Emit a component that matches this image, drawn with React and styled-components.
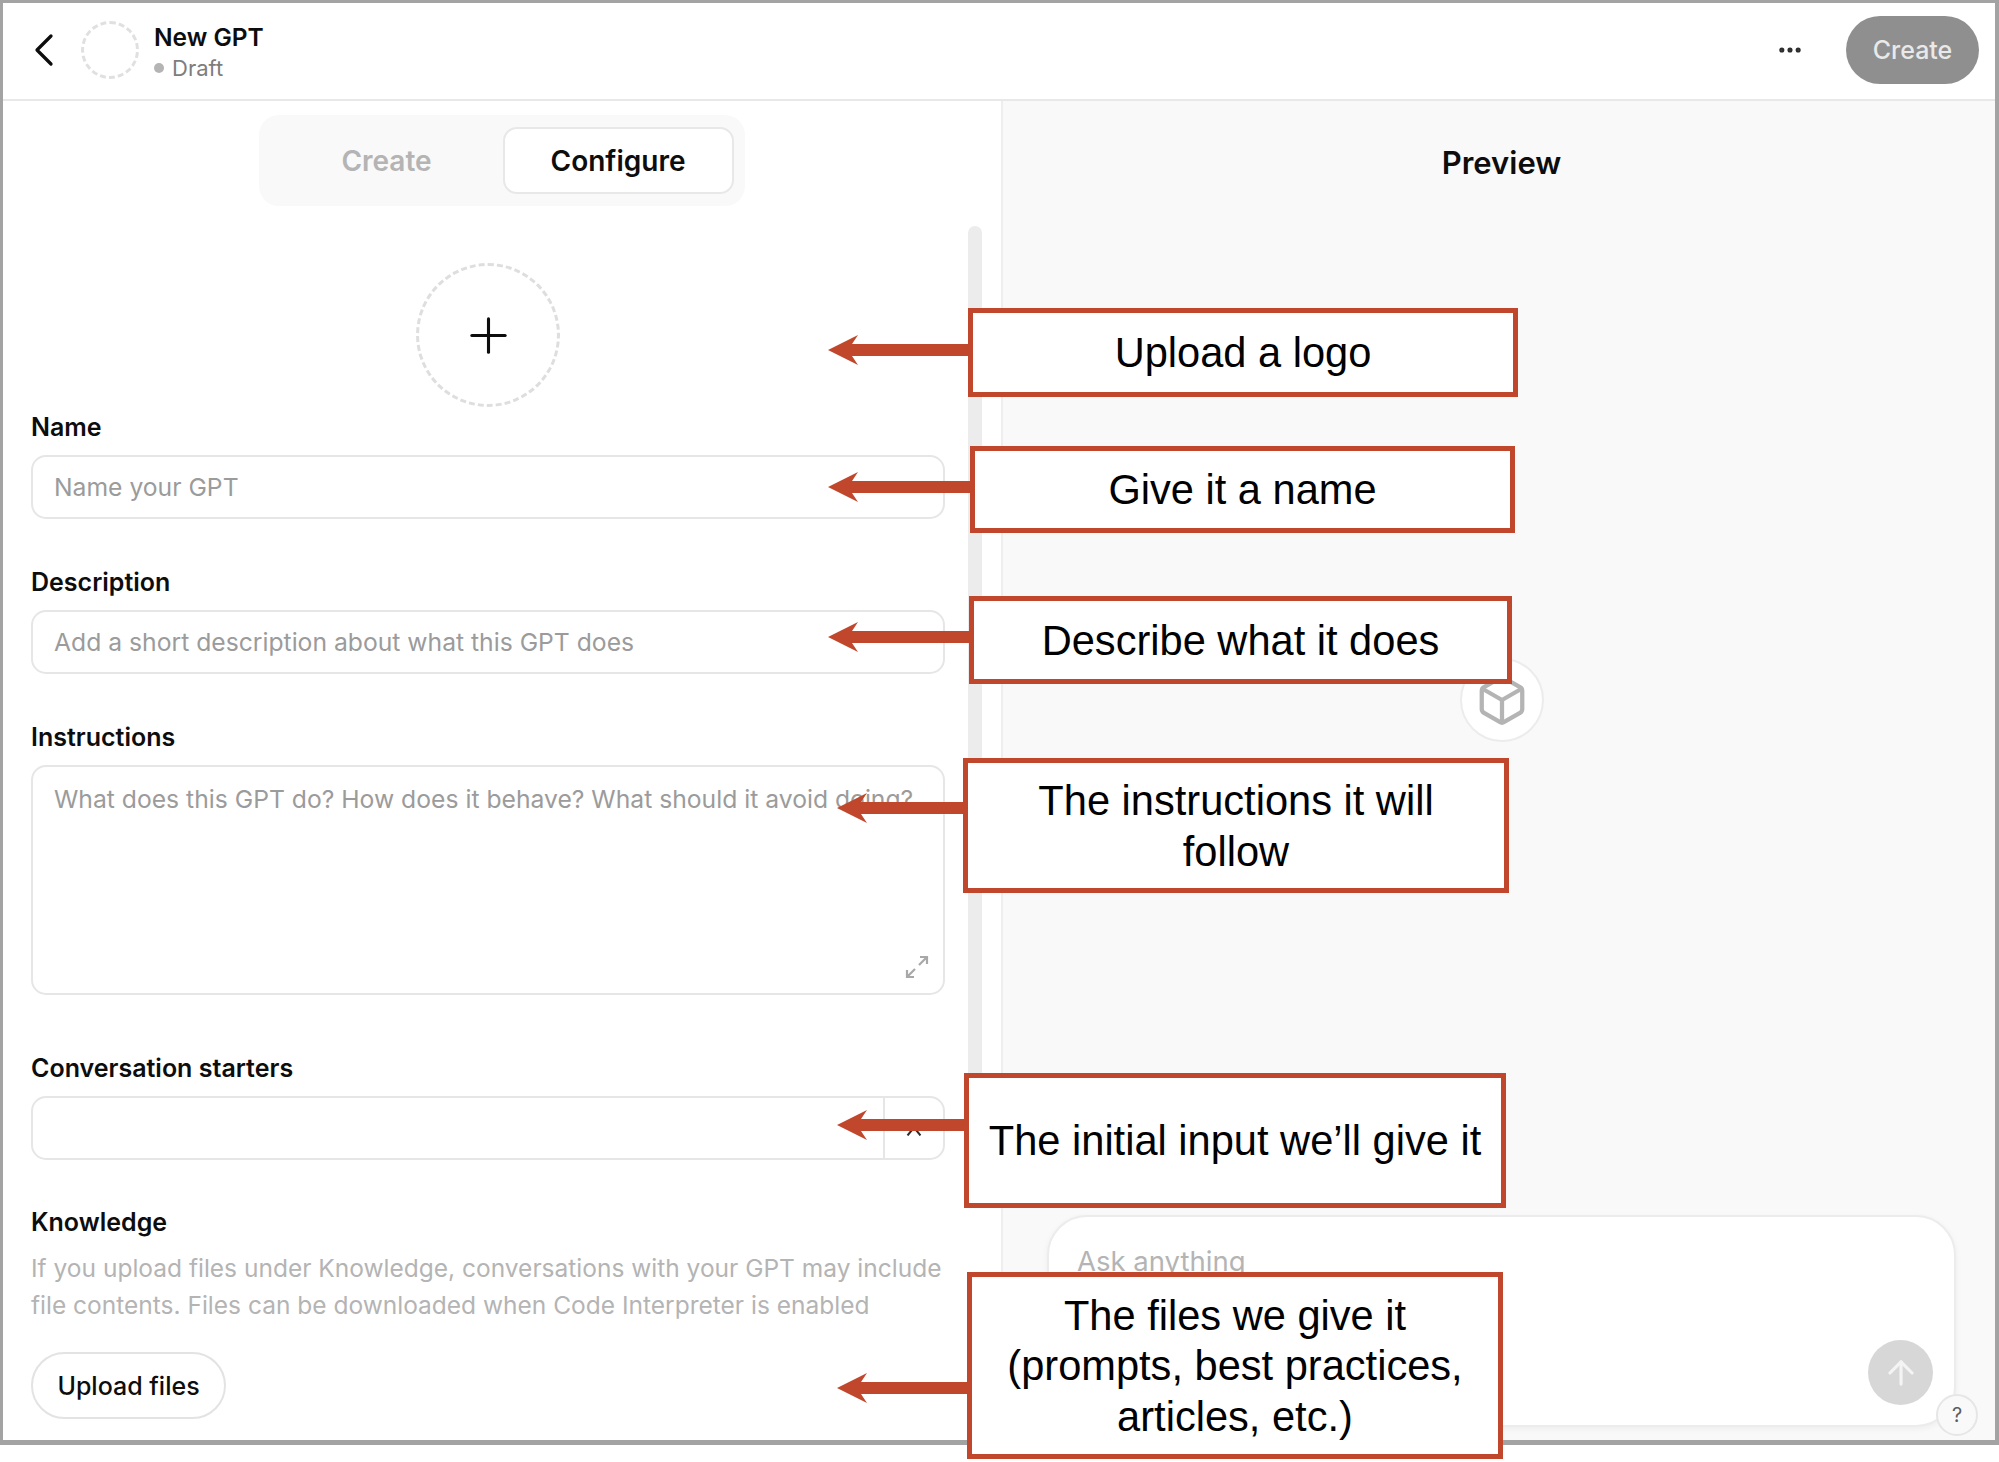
import styled, { createGlobalStyle } from 'styled-components';
import { Box, ChevronLeft, Ellipsis, Plus, ArrowUp } from 'lucide-react';

const GlobalStyle = createGlobalStyle`
  html, body {
    margin: 0;
    background: #fff;
  }
  * {
    box-sizing: border-box;
  }
`;

const Page = styled.div`
  position: relative;
  width: 1999px;
  height: 1462px;
  overflow: hidden;
  font-family: Inter, 'Noto Sans', sans-serif;
  color: #0d0d0d;
`;

const Frame = styled.div`
  display: flex;
  flex-direction: column;
  width: 1999px;
  height: 1445px;
  border: solid #a3a3a3;
  border-width: 3px 4px 5px 3px;
`;

const Header = styled.header`
  display: flex;
  flex: none;
  align-items: center;
  height: 98px;
  padding: 0 16px 3px 33px;
  border-bottom: 2px solid #e8e8e8;
`;

const BackButton = styled.div`
  display: flex;
  margin-left: -20px;
  color: #0d0d0d;
`;

const HeaderAvatar = styled.div`
  width: 58px;
  height: 58px;
  margin: 0 15px 0 9px;
  border: 3px dashed #e0e0e0;
  border-radius: 50%;
`;

const Title = styled.div`
  flex: 1;
  padding-top: 3px;
`;

const TitleName = styled.div`
  font-size: 24.5px;
  font-weight: 600;
  line-height: 32px;
`;

const TitleStatus = styled.div`
  display: flex;
  align-items: center;
  gap: 8px;
  margin-top: 1px;
  font-size: 22px;
  line-height: 28px;
  color: #7d7d7d;

  &::before {
    content: '';
    width: 10px;
    height: 10px;
    border-radius: 50%;
    background: #b4b4b4;
  }
`;

const MoreButton = styled.div`
  display: flex;
  margin-right: 42px;
  color: #2d2d2d;
`;

const PublishButton = styled.div`
  display: flex;
  align-items: center;
  justify-content: center;
  width: 133px;
  height: 68px;
  border-radius: 34px;
  background: #8f8f8f;
  color: #e9e9e9;
  font-size: 25px;
  font-weight: 500;
`;

const Main = styled.div`
  display: flex;
  flex: 1;
  min-height: 0;
`;

const EditorPane = styled.section`
  position: relative;
  flex: none;
  width: 1000px;
  height: 100%;
  padding: 14px 0 0 28px;
  overflow: hidden;
  border-right: 2px solid #eeeeee;
`;

const Scrollbar = styled.div`
  position: absolute;
  top: 125px;
  left: 965px;
  width: 14px;
  height: 980px;
  border-radius: 7px;
  background: #ececec;
`;

const TabsRow = styled.div`
  display: flex;
  justify-content: center;
  width: 941px;
`;

const Tabs = styled.div`
  display: flex;
  align-items: center;
  justify-content: flex-end;
  width: 486px;
  height: 91px;
  padding-right: 11px;
  border-radius: 20px;
  background: #f9f9f9;
`;

const Tab = styled.div`
  display: flex;
  align-items: center;
  justify-content: center;
  width: ${(p) => (p.$active ? '231px' : '232px')};
  height: 67px;
  border-radius: 14px;
  font-size: 28px;
  font-weight: 600;
  color: ${(p) => (p.$active ? '#0d0d0d' : '#b4b4b4')};
  background: ${(p) => (p.$active ? '#fff' : 'transparent')};
  border: ${(p) => (p.$active ? '2px solid #e8e8e8' : 'none')};
`;

const Form = styled.div`
  width: 914px;
`;

const LogoPicker = styled.div`
  display: flex;
  align-items: center;
  justify-content: center;
  width: 144px;
  height: 144px;
  margin: 57px auto 4px;
  border: 3px dashed #dedede;
  border-radius: 50%;
  color: #0d0d0d;
`;

const Label = styled.div`
  margin-bottom: 12px;
  font-size: 25px;
  font-weight: 600;
  line-height: 32px;
`;

const Field = styled.div`
  display: flex;
  position: relative;
  height: ${(p) => p.$height || 64}px;
  margin-bottom: ${(p) => p.$after || 47}px;
  padding: ${(p) => (p.$multi ? '16px 21px' : '0 21px')};
  align-items: ${(p) => (p.$multi ? 'flex-start' : 'center')};
  border: 2px solid #e6e6e6;
  border-radius: 15px;
  font-size: 24.7px;
  line-height: 32px;
  color: #9b9b9b;
  white-space: nowrap;
`;

const ExpandIcon = styled.svg`
  position: absolute;
  right: 14px;
  bottom: 14px;
  width: 24px;
  height: 24px;
  color: #a8a8a8;
`;

const StarterInput = styled.div`
  display: flex;
  justify-content: flex-end;
  height: 64px;
  margin-bottom: 46px;
  border: 2px solid #e6e6e6;
  border-radius: 15px;
`;

const StarterRemove = styled.div`
  display: flex;
  align-items: center;
  justify-content: center;
  width: 60px;
  padding-top: 5px;
  border-left: 2px solid #e6e6e6;
  color: #2d2d2d;
`;

const Hint = styled.p`
  margin: 0 0 28px;
  font-size: 24.5px;
  line-height: 37px;
  color: #b4b4b4;
`;

const UploadButton = styled.div`
  display: inline-flex;
  align-items: center;
  justify-content: center;
  width: 195px;
  height: 67px;
  border: 2px solid #e3e3e3;
  border-radius: 34px;
  font-size: 25px;
  font-weight: 500;
`;

const PreviewPane = styled.section`
  position: relative;
  display: flex;
  flex: 1;
  flex-direction: column;
  align-items: center;
  padding-left: 5px;
  background: #f9f9f9;
`;

const PreviewTitle = styled.h2`
  margin: 42px 0 0;
  font-size: 31px;
  font-weight: 600;
  line-height: 40px;
`;

const PreviewBody = styled.div`
  display: flex;
  flex: 1;
  align-items: center;
  justify-content: center;
  padding-top: 2px;
`;

const CubeBadge = styled.div`
  display: flex;
  align-items: center;
  justify-content: center;
  width: 84px;
  height: 84px;
  border: 2px solid #ececec;
  border-radius: 50%;
  background: #fff;
  color: #b4b4b4;
`;

const Composer = styled.div`
  position: relative;
  width: 909px;
  height: 212px;
  margin-bottom: 13px;
  padding: 24px 28px;
  border: 2px solid #ececec;
  border-radius: 40px;
  background: #fff;
  box-shadow: 0 2px 6px rgba(0, 0, 0, 0.05);
  font-size: 27.5px;
  line-height: 40px;
  color: #b4b4b4;
`;

const SendButton = styled.div`
  position: absolute;
  right: 21px;
  bottom: 20px;
  display: flex;
  align-items: center;
  justify-content: center;
  width: 65px;
  height: 65px;
  border-radius: 50%;
  background: #d7d7d7;
  color: #f4f4f4;
`;

const HelpBadge = styled.div`
  position: absolute;
  right: -24px;
  bottom: -11px;
  display: flex;
  align-items: center;
  justify-content: center;
  width: 42px;
  height: 42px;
  border: 2px solid #e6e6e6;
  border-radius: 50%;
  background: #f9f9f9;
  font-size: 20px;
  color: #5d5d5d;
`;

const Callout = styled.div`
  position: absolute;
  left: ${(p) => p.$x}px;
  top: ${(p) => p.$y}px;
  display: flex;
  align-items: center;
  justify-content: center;
  width: ${(p) => p.$w}px;
  height: ${(p) => p.$h}px;
  padding-top: 2px;
  border: 5px solid #c0472c;
  background: #fff;
  font-family: 'Liberation Sans', Arial, sans-serif;
  font-size: 41.6px;
  line-height: 50.5px;
  text-align: center;
  color: #000;
  white-space: nowrap;
`;

const CalloutArrow = styled.svg`
  position: absolute;
  right: 100%;
  top: ${(p) => p.$top}px;
  color: #c0472c;
`;

const callouts = [
  { x: 968, y: 308, w: 550, h: 89, arrow: 27, len: 140, text: <>Upload a logo</> },
  { x: 970, y: 446, w: 545, h: 87, arrow: 26, len: 142, text: <>Give it a name</> },
  { x: 969, y: 596, w: 543, h: 88, arrow: 26, len: 141, text: <>Describe what it does</> },
  { x: 963, y: 758, w: 546, h: 135, arrow: 35, len: 126, text: <>The instructions it will<br />follow</> },
  { x: 964, y: 1073, w: 542, h: 135, arrow: 37, len: 127, text: <>The initial input we’ll give it</> },
  { x: 967, y: 1272, w: 536, h: 187, arrow: 101, len: 130, text: <>The files we give it<br />(prompts, best practices,<br />articles, etc.)</> },
];

const Arrow = ({ top, len }) => (
  <CalloutArrow $top={top} width={len} height={30} viewBox={`0 0 ${len} 30`}>
    <path d={`M0 15 L30 0 L24 9 H${len} V21 H24 L30 30 Z`} fill="currentColor" />
  </CalloutArrow>
);

export default function App() {
  return (
    <Page>
      <GlobalStyle />
      <Frame>
        <Header>
          <BackButton>
            <ChevronLeft size={56} strokeWidth={1.4} />
          </BackButton>
          <HeaderAvatar />
          <Title>
            <TitleName>New GPT</TitleName>
            <TitleStatus>Draft</TitleStatus>
          </Title>
          <MoreButton>
            <Ellipsis size={28} strokeWidth={2.4} />
          </MoreButton>
          <PublishButton>Create</PublishButton>
        </Header>
        <Main>
          <EditorPane>
            <Scrollbar />
            <TabsRow>
              <Tabs>
                <Tab>Create</Tab>
                <Tab $active>Configure</Tab>
              </Tabs>
            </TabsRow>
            <Form>
              <LogoPicker>
                <Plus size={57} strokeWidth={1.3} />
              </LogoPicker>
              <Label>Name</Label>
              <Field>Name your GPT</Field>
              <Label>Description</Label>
              <Field>Add a short description about what this GPT does</Field>
              <Label>Instructions</Label>
              <Field $multi $height={230} $after={57}>
                What does this GPT do? How does it behave? What should it avoid doing?
                <ExpandIcon viewBox="0 0 24 24" fill="none" stroke="currentColor" strokeWidth="2.2">
                  <path d="M14 10 L22 2 M15 2 H22 V9 M10 14 L2 22 M2 15 V22 H9" />
                </ExpandIcon>
              </Field>
              <Label>Conversation starters</Label>
              <StarterInput>
                <StarterRemove>
                  <svg width="16" height="10" viewBox="0 0 16 10" fill="none" stroke="currentColor" strokeWidth="2">
                    <path d="M1.5 9.5 L8 1.5 L14.5 9.5" />
                  </svg>
                </StarterRemove>
              </StarterInput>
              <Label>Knowledge</Label>
              <Hint>
                If you upload files under Knowledge, conversations with your GPT may include file contents. Files can be downloaded when Code Interpreter is enabled
              </Hint>
              <UploadButton>Upload files</UploadButton>
            </Form>
          </EditorPane>
          <PreviewPane>
            <PreviewTitle>Preview</PreviewTitle>
            <PreviewBody>
              <CubeBadge>
                <Box size={54} strokeWidth={1.9} />
              </CubeBadge>
            </PreviewBody>
            <Composer>
              Ask anything
              <SendButton>
                <ArrowUp size={38} strokeWidth={2} />
              </SendButton>
              <HelpBadge>?</HelpBadge>
            </Composer>
          </PreviewPane>
        </Main>
      </Frame>
      {callouts.map((c) => (
        <Callout key={c.y} $x={c.x} $y={c.y} $w={c.w} $h={c.h}>
          <Arrow top={c.arrow - 5} len={c.len + 5} />
          <span>{c.text}</span>
        </Callout>
      ))}
    </Page>
  );
}
